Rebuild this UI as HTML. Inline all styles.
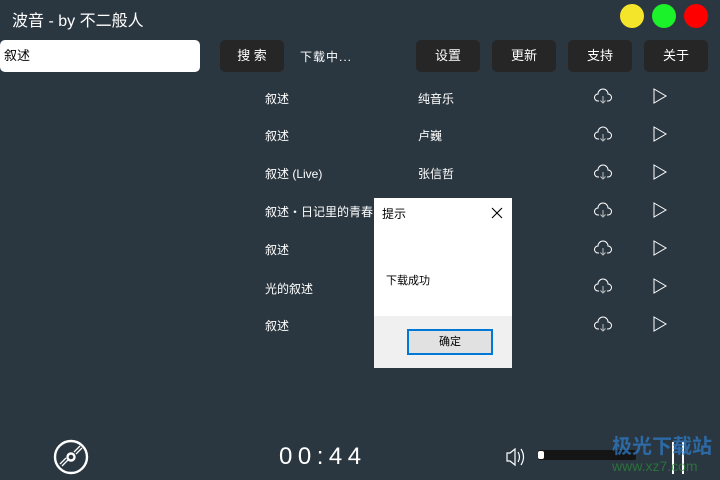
<!DOCTYPE html>
<html><head><meta charset="utf-8"><style>
body{margin:0;width:720px;height:480px;background:#2b3740;font-family:"Liberation Sans","Noto Sans CJK SC",sans-serif;color:#fff;position:relative;overflow:hidden}
.a{position:absolute}
.btn{position:absolute;top:40px;height:32px;width:64px;background:#262626;border-radius:5px;color:#fff;font-size:13px;text-align:center;line-height:32px}
.dot{position:absolute;top:4px;width:24px;height:24px;border-radius:50%}
.r{position:absolute;font-size:12px;color:#fff}
</style></head><body>
<div class="a" style="left:12px;top:7px;font-size:16px">波音 - by 不二般人</div>
<div class="dot" style="left:620px;background:#f5e52a"></div>
<div class="dot" style="left:652px;background:#1cf22a"></div>
<div class="dot" style="left:684px;background:#fe0000"></div>
<div class="a" style="left:0;top:40px;width:200px;height:32px;background:#fff;border-radius:5px;color:#000;font-size:13px;line-height:32px;padding-left:4px;box-sizing:border-box">叙述</div>
<div class="btn" style="left:220px">搜 索</div>
<div class="a" style="left:300px;top:48px;font-size:12px;letter-spacing:1px">下载中...</div>
<div class="btn" style="left:416px">设置</div>
<div class="btn" style="left:492px">更新</div>
<div class="btn" style="left:568px">支持</div>
<div class="btn" style="left:644px">关于</div>

<div class="r" style="left:265px;top:90px">叙述</div><div class="r" style="left:418px;top:90px">纯音乐</div>
<div class="r" style="left:265px;top:127px">叙述</div><div class="r" style="left:418px;top:127px">卢巍</div>
<div class="r" style="left:265px;top:165px">叙述 (Live)</div><div class="r" style="left:418px;top:165px">张信哲</div>
<div class="r" style="left:265px;top:203px">叙述・日记里的青春</div>
<div class="r" style="left:265px;top:241px">叙述</div>
<div class="r" style="left:265px;top:280px">光的叙述</div>
<div class="r" style="left:265px;top:317px">叙述</div>

<svg class="a" style="left:0;top:0" width="720" height="480" fill="none" stroke="#fff" stroke-width="1">
<defs>
<g id="cl"><path d="M-4 5 H-5 A3.5 3.5 0 0 1 -5 -2 A5 5 0 0 1 5 -2 A3.5 3.5 0 0 1 5 5 H4"/><path d="M0 0 V7 M-2.5 4.5 L0 7 L2.5 4.5" stroke="#bbb"/></g>
<g id="pl"><path d="M-6 -7 L6 0 L-6 7 Z"/></g>
</defs>
<use href="#cl" x="603" y="96"/><use href="#pl" x="660" y="96"/>
<use href="#cl" x="603" y="134"/><use href="#pl" x="660" y="134"/>
<use href="#cl" x="603" y="172"/><use href="#pl" x="660" y="172"/>
<use href="#cl" x="603" y="210"/><use href="#pl" x="660" y="210"/>
<use href="#cl" x="603" y="248"/><use href="#pl" x="660" y="248"/>
<use href="#cl" x="603" y="286"/><use href="#pl" x="660" y="286"/>
<use href="#cl" x="603" y="324"/><use href="#pl" x="660" y="324"/>
<circle cx="71" cy="457" r="16" stroke-width="2.4"/><circle cx="71" cy="457" r="3.5" stroke-width="2.4"/>
<path d="M74 452 L80 446 M76 454 L82 448 M62 466 L68 460 M60 464 L66 458" stroke-width="1.3"/>
<path d="M507 453 H510 L515 449 V465 L510 461 H507 Z M518 452 Q521 457 518 462 M521 449 Q526 457 521 465" stroke-width="1.2"/>
<path d="M673 442 V474 M683 442 V474" stroke-width="2"/>
</svg>
<div class="a" style="left:279px;top:443px;font-size:24px;letter-spacing:5.5px">00:44</div>
<div class="a" style="left:538px;top:450px;width:98px;height:10px;background:#151515;border-radius:2px"></div>
<div class="a" style="left:538px;top:451px;width:6px;height:8px;background:#fff;border-radius:2px"></div>
<div class="a" style="left:612px;top:430px;font-size:20px;font-weight:bold;color:#2d7fd0;opacity:.7">极光下载站</div>
<div class="a" style="left:612px;top:458px;font-size:14px;color:#2a8a3a;opacity:.7">www.xz7.com</div>

<div class="a" style="left:374px;top:198px;width:138px;height:170px;background:#fff;color:#000">
<div class="a" style="left:8px;top:7px;font-size:12px">提示</div>
<svg class="a" style="left:117px;top:9px" width="12" height="12" stroke="#000" stroke-width="1.1"><path d="M1 1 L11 11 M11 1 L1 11"/></svg>
<div class="a" style="left:12px;top:74px;font-size:11px">下载成功</div>
<div class="a" style="left:0;top:118px;width:138px;height:52px;background:#f0f0f0"></div>
<div class="a" style="left:33px;top:131px;width:82px;height:22px;background:#e1e1e1;border:2px solid #0078d7;font-size:11px;text-align:center;line-height:22px">确定</div>
</div>
</body></html>
